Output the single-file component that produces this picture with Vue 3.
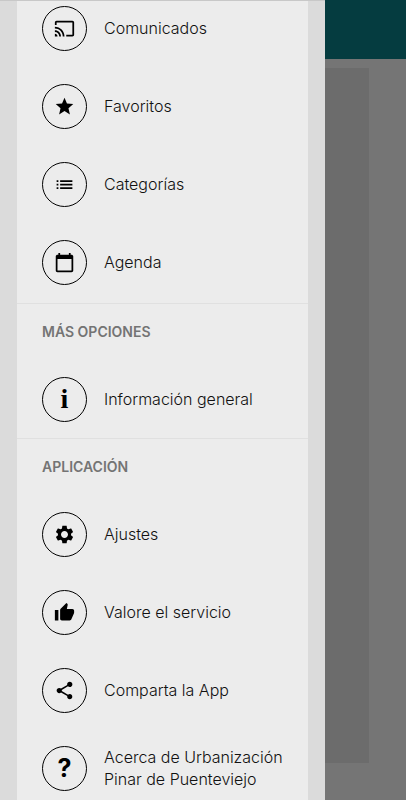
<script setup>
const sections = [
  {
    id: 'principal',
    title: '',
    items: [
      { label: 'Comunicados', icon: 'cast' },
      { label: 'Favoritos', icon: 'star' },
      { label: 'Categorías', icon: 'list' },
      { label: 'Agenda', icon: 'calendar' },
    ],
  },
  {
    id: 'opciones',
    title: 'MÁS OPCIONES',
    items: [{ label: 'Información general', glyph: 'i', glyphClass: 'glyph-info' }],
  },
  {
    id: 'aplicacion',
    title: 'APLICACIÓN',
    items: [
      { label: 'Ajustes', icon: 'settings' },
      { label: 'Valore el servicio', icon: 'thumb' },
      { label: 'Comparta la App', icon: 'share' },
      { label: 'Acerca de Urbanización Pinar de Puenteviejo', glyph: '?', glyphClass: 'glyph-help' },
    ],
  },
]

const icons = {
  cast: 'M21 3H3c-1.1 0-2 .9-2 2v3h2V5h18v14h-7v2h7c1.1 0 2-.9 2-2V5c0-1.1-.9-2-2-2zM1 18v3h3c0-1.66-1.34-3-3-3zm0-4v2c2.76 0 5 2.24 5 5h2c0-3.87-3.13-7-7-7zm0-4v2c4.97 0 9 4.03 9 9h2c0-6.08-4.93-11-11-11z',
  star: 'M12 17.27L18.18 21l-1.64-7.03L22 9.24l-7.19-.61L12 2 9.19 8.63 2 9.24l5.46 4.73L5.82 21z',
  list: 'M3 13h2v-2H3v2zm0 4h2v-2H3v2zm0-8h2V7H3v2zm4 4h14v-2H7v2zm0 4h14v-2H7v2zM7 7v2h14V7H7z',
  calendar: 'M20 3h-1V1h-2v2H7V1H5v2H4c-1.1 0-2 .9-2 2v16c0 1.1.9 2 2 2h16c1.1 0 2-.9 2-2V5c0-1.1-.9-2-2-2zm0 18H4V8h16v13z',
  settings: 'M19.43 12.98c.04-.32.07-.64.07-.98s-.03-.66-.07-.98l2.11-1.65c.19-.15.24-.42.12-.64l-2-3.46c-.12-.22-.39-.3-.61-.22l-2.49 1c-.52-.4-1.08-.73-1.69-.98l-.38-2.65C14.46 2.18 14.25 2 14 2h-4c-.25 0-.46.18-.49.42l-.38 2.65c-.61.25-1.17.59-1.69.98l-2.49-1c-.23-.09-.49 0-.61.22l-2 3.46c-.13.22-.07.49.12.64l2.11 1.65c-.04.32-.07.65-.07.98s.03.66.07.98l-2.11 1.65c-.19.15-.24.42-.12.64l2 3.46c.12.22.39.3.61.22l2.49-1c.52.4 1.08.73 1.69.98l.38 2.65c.03.24.24.42.49.42h4c.25 0 .46-.18.49-.42l.38-2.65c.61-.25 1.17-.59 1.69-.98l2.49 1c.23.09.49 0 .61-.22l2-3.46c.12-.22.07-.49-.12-.64l-2.11-1.65zM12 16c-2.2 0-4-1.8-4-4s1.8-4 4-4 4 1.8 4 4-1.8 4-4 4z',
  thumb: 'M1 21h4V9H1v12zm22-11c0-1.1-.9-2-2-2h-6.31l.95-4.57.03-.32c0-.41-.17-.79-.44-1.06L14.17 1 7.59 7.59C7.22 7.95 7 8.45 7 9v10c0 1.1.9 2 2 2h9c.83 0 1.54-.5 1.84-1.22l3.02-7.05c.09-.23.14-.47.14-.73v-2z',
  share: 'M18 16.08c-.76 0-1.44.3-1.96.77L8.91 12.7c.05-.23.09-.46.09-.7s-.04-.47-.09-.7l7.05-4.11c.54.5 1.25.81 2.04.81 1.66 0 3-1.34 3-3s-1.34-3-3-3-3 1.34-3 3c0 .24.04.47.09.7L8.04 9.81C7.5 9.31 6.79 9 6 9c-1.66 0-3 1.34-3 3s1.34 3 3 3c.79 0 1.5-.31 2.04-.81l7.12 4.16c-.05.21-.08.43-.08.65 0 1.61 1.31 2.92 2.92 2.92s2.92-1.31 2.92-2.92-1.31-2.92-2.92-2.92z',
}
</script>

<template>
  <div class="screen">
    <aside class="drawer">
      <nav class="menu">
        <section v-for="section in sections" :key="section.id" class="section">
          <h2 v-if="section.title" class="heading">{{ section.title }}</h2>
          <a v-for="item in section.items" :key="item.label" class="item" href="#">
            <span class="badge" aria-hidden="true">
              <svg v-if="item.icon" class="icon" viewBox="0 0 24 24"><path :d="icons[item.icon]" /></svg>
              <span v-else :class="item.glyphClass">{{ item.glyph }}</span>
            </span>
            <span class="label">{{ item.label }}</span>
          </a>
        </section>
      </nav>
    </aside>
    <main class="page">
      <header class="topbar"></header>
      <div class="panel"></div>
    </main>
  </div>
</template>

<style>
body {
  background: #757575;
}
</style>

<style scoped>
.screen {
  display: flex;
  height: 100vh;
  overflow: hidden;
  font-family: Inter, "Open Sans", sans-serif;
}

.drawer {
  box-sizing: border-box;
  flex: 0 0 80%;
  overflow: hidden;
  padding: 0 17px;
  border-top: 1px solid #c8c8c8;
  background: #dbdbdb;
}

/* The list is scrolled slightly past its first row. */
.menu {
  margin-top: -12px;
  background: #ececec;
}

.section:first-child {
  padding-bottom: 2px;
}

.section + .section {
  border-top: 1px solid #e0e0e0;
}

.heading {
  margin: 0;
  padding: 0 25px;
  font-size: 14px;
  font-weight: 600;
  line-height: 56px;
  color: #747474;
}

.item {
  display: flex;
  align-items: center;
  gap: 17px;
  box-sizing: border-box;
  height: 78px;
  padding: 0 16px 0 25px;
  color: #111;
  text-decoration: none;
}

.badge {
  display: flex;
  flex: none;
  align-items: center;
  justify-content: center;
  box-sizing: border-box;
  width: 45px;
  height: 45px;
  border: 1px solid #000;
  border-radius: 50%;
  color: #000;
}

.icon {
  width: 21px;
  height: 21px;
  fill: currentColor;
}

.glyph-info {
  font-family: "Liberation Serif", serif;
  font-size: 28px;
  font-weight: 700;
  line-height: 24px;
}

.glyph-help {
  font-size: 25px;
  font-weight: 700;
  line-height: 24px;
}

.label {
  font-size: 16px;
  font-weight: 300;
  line-height: 22px;
}

.page {
  display: flex;
  flex: 1;
  flex-direction: column;
  background: #757575;
}

.topbar {
  height: 59px;
  background: #053c40;
}

.panel {
  flex: 1;
  margin: 9px 37px 37px 0;
  background: #6c6c6c;
}
</style>
